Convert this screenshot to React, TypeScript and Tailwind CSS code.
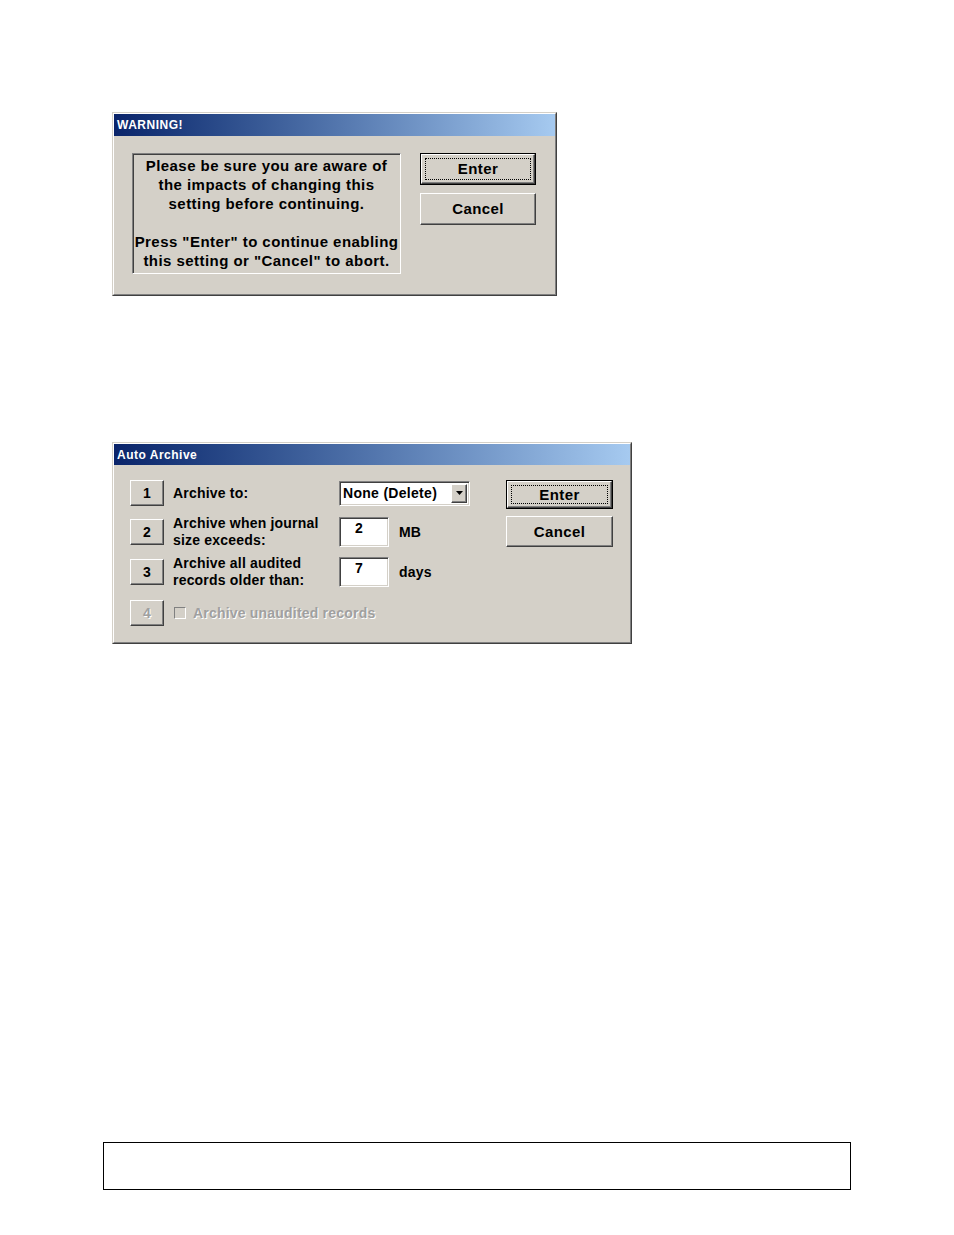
import type React from "react"

const font = "font-['Liberation_Sans',Arial,sans-serif]"

// raised 3D frame used for classic buttons
const Raised = ({ className = "", children }: { className?: string; children?: React.ReactNode }) => (
  <div
    className={`flex items-center justify-center bg-[#d4d0c8] border border-t-white border-l-white border-r-[#404040] border-b-[#404040] shadow-[inset_-1px_-1px_0_#808080] ${className}`}
  >
    {children}
  </div>
)

const DefaultButton = ({ label, className = "" }: { label: string; className?: string }) => (
  <div className={`border border-black ${className}`}>
    <div className="h-full w-full p-[3px] bg-[#d4d0c8] border border-t-white border-l-white border-r-[#404040] border-b-[#404040] shadow-[inset_-1px_-1px_0_#808080]">
      <div className="h-full w-full flex items-center justify-center border border-dotted border-black text-[15px] font-bold tracking-[0.4px] text-black">
        {label}
      </div>
    </div>
  </div>
)

const Sunken = ({ className = "", children }: { className?: string; children?: React.ReactNode }) => (
  <div
    className={`border border-t-[#808080] border-l-[#808080] border-r-white border-b-white shadow-[inset_1px_1px_0_#404040,inset_-1px_-1px_0_#d4d0c8] ${className}`}
  >
    {children}
  </div>
)

const Dialog = ({ title, titleH, className = "", children }: { title: string; titleH: string; className?: string; children: React.ReactNode }) => (
  <div className={`bg-[#d4d0c8] border border-t-[#d4d0c8] border-l-[#d4d0c8] border-r-[#404040] border-b-[#404040] ${className}`}>
    <div className="h-full flex flex-col border border-t-white border-l-white border-r-[#808080] border-b-[#808080]">
      <div className={`${titleH} flex items-center pl-[3px] bg-gradient-to-r from-[#0a246a] to-[#a6caf0] text-white text-[12px] font-bold tracking-[0.5px]`}>
        {title}
      </div>
      {children}
    </div>
  </div>
)

const NumButton = ({ n, disabled = false }: { n: string; disabled?: boolean }) => (
  <Raised className="w-[34px] h-[26px] shrink-0">
    <span className={`text-[14px] font-bold ${disabled ? "text-[#a0a0a0] [text-shadow:1px_1px_0_#ffffff]" : "text-black"}`}>{n}</span>
  </Raised>
)

const Field = ({ value }: { value: string }) => (
  <Sunken className="w-[50px] h-[30px] bg-white pl-[15px] pt-[2px] text-[14px] font-bold leading-[17px] text-black">
    {value}
  </Sunken>
)

export default function App() {
  return (
    <div className={`w-[954px] min-h-[1235px] bg-white ${font} flex flex-col`}>
      <Dialog title="WARNING!" titleH="h-[22px]" className="ml-[112px] mt-[112px] w-[445px] h-[184px]">
        <div className="flex gap-[19px] pl-[18px] pt-[17px]">
          <Sunken className="w-[269px] h-[121px] pt-[2px] text-center text-[15px] leading-[19px] font-bold tracking-[0.45px] text-black whitespace-nowrap">
            <p>Please be sure you are aware of</p>
            <p>the impacts of changing this</p>
            <p>setting before continuing.</p>
            <p>&nbsp;</p>
            <p>Press "Enter" to continue enabling</p>
            <p>this setting or "Cancel" to abort.</p>
          </Sunken>
          <div className="flex flex-col gap-[8px]">
            <DefaultButton label="Enter" className="w-[116px] h-[32px]" />
            <Raised className="w-[116px] h-[32px] text-[15px] font-bold tracking-[0.4px] text-black">Cancel</Raised>
          </div>
        </div>
      </Dialog>

      <Dialog title="Auto Archive" titleH="h-[21px]" className="ml-[112px] mt-[146px] w-[520px] h-[202px]">
        <div className="flex pl-[16px] pr-[17px] pt-[9px] text-[14px] leading-[17px] font-bold tracking-[0.2px] text-black">
          <div className="flex flex-col">
            <div className="h-[38px] flex items-center">
              <NumButton n="1" />
              <div className="ml-[9px] w-[166px]">Archive to:</div>
              <Sunken className="w-[131px] h-[25px] bg-white flex items-center pl-[3px] pr-[2px]">
                <span className="flex-1 tracking-[0.3px]">None (Delete)</span>
                <Raised className="w-[16px] h-[19px]">
                  <svg width="7" height="4" viewBox="0 0 7 4">
                    <path d="M0 0h7L3.5 4z" fill="#000" />
                  </svg>
                </Raised>
              </Sunken>
            </div>
            <div className="h-[40px] flex items-center">
              <NumButton n="2" />
              <div className="ml-[9px] w-[166px]">
                <p>Archive when journal</p>
                <p>size exceeds:</p>
              </div>
              <Field value="2" />
              <span className="ml-[10px]">MB</span>
            </div>
            <div className="h-[40px] flex items-center">
              <NumButton n="3" />
              <div className="ml-[9px] w-[166px]">
                <p>Archive all audited</p>
                <p>records older than:</p>
              </div>
              <Field value="7" />
              <span className="ml-[10px]">days</span>
            </div>
            <div className="h-[42px] flex items-center">
              <NumButton n="4" disabled />
              <div className="ml-[10px] w-[12px] h-[12px] bg-[#d4d0c8] border border-t-[#808080] border-l-[#808080] border-r-white border-b-white" />
              <span className="ml-[7px] text-[#a0a0a0] [text-shadow:1px_1px_0_#ffffff]">Archive unaudited records</span>
            </div>
          </div>
          <div className="ml-auto mt-[6px] flex flex-col gap-[7px]">
            <DefaultButton label="Enter" className="w-[107px] h-[29px]" />
            <Raised className="w-[107px] h-[31px] text-[15px] font-bold tracking-[0.4px]">Cancel</Raised>
          </div>
        </div>
      </Dialog>

      <div className="ml-[103px] mt-[498px] w-[748px] h-[48px] border border-black" />
    </div>
  )
}
